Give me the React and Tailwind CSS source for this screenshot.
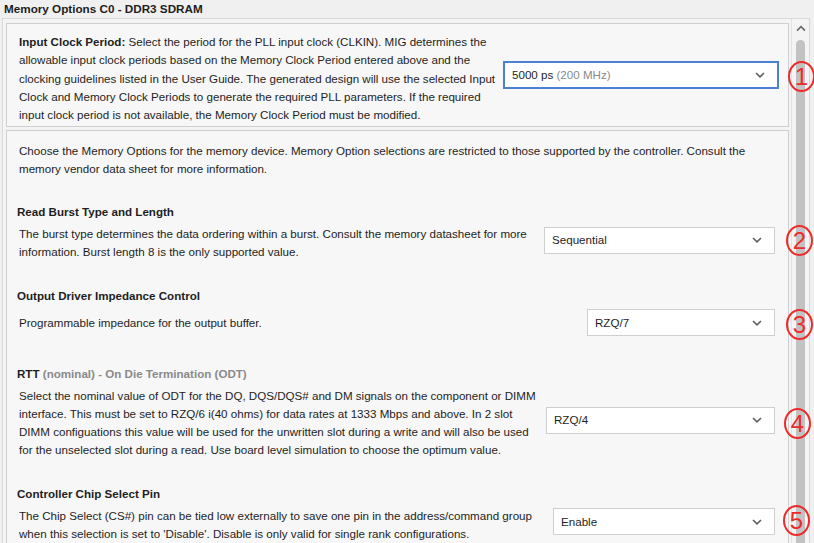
import React from "react";

const Chevron = () => (
  <svg width="10" height="6" viewBox="0 0 10 6" className="shrink-0">
    <path d="M1 1 L5 4.8 L9 1" fill="none" stroke="#606060" strokeWidth="1.7" />
  </svg>
);

const Select = ({ value, extra, className }) => (
  <div className={"flex items-center justify-between bg-white pl-[7px] pr-[12px] " + className}>
    <span>
      {value}
      {extra && <span className="text-[#8a8a8a]"> {extra}</span>}
    </span>
    <Chevron />
  </div>
);

const Marker = ({ n, className }) => (
  <div
    className={
      "absolute flex h-[31px] w-[27px] items-center justify-center rounded-[50%] border-2 border-[#ee2b2b] text-[24px] leading-none text-[#ee2b2b] " +
      className
    }
  >
    {n}
  </div>
);

const App = () => {
  return (
    <div className="relative h-[543px] w-[814px] overflow-hidden bg-[#f0f0f0] font-['Liberation_Sans',Arial,sans-serif] text-[11.6px] text-[#1e1e1e]">
      <div className="h-[18px] pl-[4px] pt-[1px] text-[11.7px] font-bold leading-[15px]">Memory Options C0 - DDR3 SDRAM</div>

      <div className="ml-[2px] mr-[4px] flex h-[525px] border border-b-0 border-[#d9d9d9] bg-[#f4f4f4]">
        <div className="flex-1 pl-[3px] pt-[4px]">
          <div className="flex h-[104px] items-start border border-[#cfcfcf] bg-[#f7f7f7] pl-[12px] pt-[9px]">
            <p className="w-[478px] leading-[18.3px]">
              <span className="font-bold">Input Clock Period:</span> Select the period for the PLL input clock (CLKIN).
              MIG determines the allowable input clock periods based on the Memory Clock Period entered above and the
              clocking guidelines listed in the User Guide. The generated design will use the selected Input Clock and
              Memory Clock Periods to generate the required PLL parameters. If the required input clock period is not
              available, the Memory Clock Period must be modified.
            </p>
            <Select
              value="5000 ps"
              extra="(200 MHz)"
              className="ml-[6px] mt-[28px] h-[28px] w-[276px] border-2 border-[#4d7fd2]"
            />
          </div>

          <div className="mt-[3px] h-[420px] border border-b-0 border-[#cfcfcf] bg-[#f7f7f7] pl-[12px] pr-[13px] pt-[11px]">
            <p className="leading-[18px]">
              Choose the Memory Options for the memory device. Memory Option selections are restricted to those
              supported by the controller. Consult the memory vendor data sheet for more information.
            </p>

            <h3 className="ml-[-2px] mt-[25px] font-bold leading-[18px]">Read Burst Type and Length</h3>
            <div className="mt-[4px] flex items-center justify-between">
              <p className="w-[515px] leading-[18px]">
                The burst type determines the data ordering within a burst. Consult the memory datasheet for more
                information. Burst length 8 is the only supported value.
              </p>
              <Select value="Sequential" className="mb-[6px] h-[27px] w-[231px] border border-[#cfcfcf]" />
            </div>

            <h3 className="ml-[-2px] mt-[26px] font-bold leading-[18px]">Output Driver Impedance Control</h3>
            <div className="mt-[4px] flex items-center justify-between">
              <p className="leading-[18px]">Programmable impedance for the output buffer.</p>
              <Select value="RZQ/7" className="h-[27px] w-[188px] border border-[#cfcfcf]" />
            </div>

            <h3 className="ml-[-2px] mt-[29px] font-bold leading-[18px]">
              RTT <span className="text-[#8a8a8a]">(nominal) - On Die Termination (ODT)</span>
            </h3>
            <div className="mt-[4px] flex items-center justify-between">
              <p className="w-[522px] leading-[18px]">
                Select the nominal value of ODT for the DQ, DQS/DQS# and DM signals on the component or DIMM interface.
                This must be set to RZQ/6 i(40 ohms) for data rates at 1333 Mbps and above. In 2 slot DIMM configuations
                this value will be used for the unwritten slot during a write and will also be used for the unselected
                slot during a read. Use board level simulation to choose the optimum value.
              </p>
              <Select value="RZQ/4" className="mb-[6px] h-[27px] w-[229px] border border-[#cfcfcf]" />
            </div>

            <h3 className="ml-[-2px] mt-[26px] font-bold leading-[18px]">Controller Chip Select Pin</h3>
            <div className="mt-[4px] flex items-center justify-between">
              <p className="w-[520px] leading-[18px]">
                The Chip Select (CS#) pin can be tied low externally to save one pin in the address/command group when
                this selection is set to 'Disable'. Disable is only valid for single rank configurations.
              </p>
              <Select value="Enable" className="mb-[7px] h-[27px] w-[222px] border border-[#cfcfcf]" />
            </div>
          </div>
        </div>

        <div className="ml-[2px] flex w-[18px] flex-col items-center border-l border-[#e2e2e2] pt-[6px]">
          <svg width="10" height="7" viewBox="0 0 10 7">
            <path d="M1 5.6 L5 1.6 L9 5.6" fill="none" stroke="#6a6a6a" strokeWidth="1.6" />
          </svg>
          <div className="mt-[8px] w-[9px] flex-1 rounded-t-[5px] bg-[#c2c2c2]" />
        </div>
      </div>

      <Marker n="1" className="left-[788px] top-[61px]" />
      <Marker n="2" className="left-[786px] top-[225px]" />
      <Marker n="3" className="left-[786px] top-[309px]" />
      <Marker n="4" className="left-[784px] top-[408px]" />
      <Marker n="5" className="left-[783px] top-[505px]" />
    </div>
  );
};

export default App;
